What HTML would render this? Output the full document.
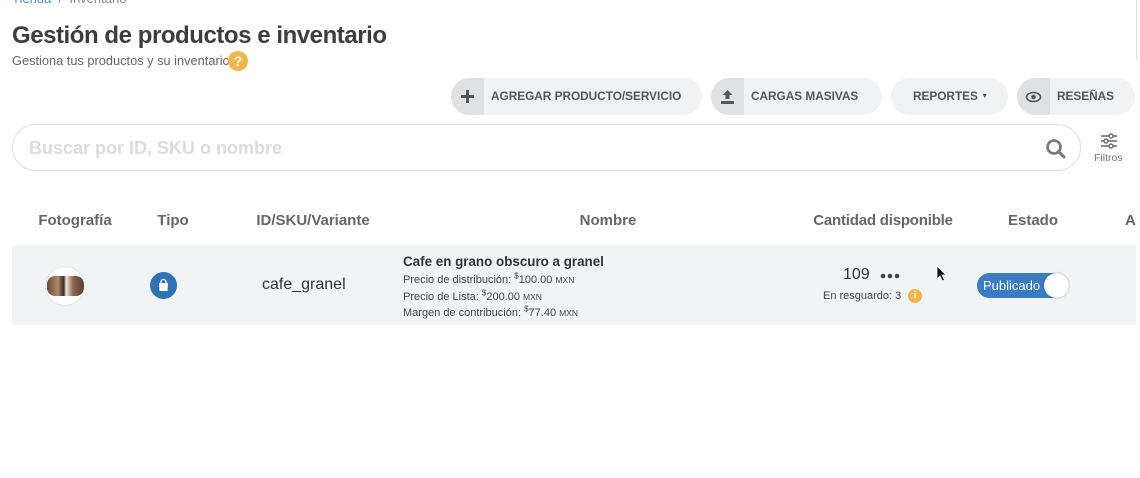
<!DOCTYPE html>
<html><head><meta charset="utf-8"><style>
body{margin:0;width:1140px;height:478px;overflow:hidden;background:#fff;font-family:"Liberation Sans",sans-serif;color:#444;position:relative}
.a{position:absolute;white-space:nowrap}
.btn{position:absolute;top:78px;height:37px;border-radius:19px;background:#f0f2f3;overflow:hidden;font-weight:bold;font-size:11.8px;color:#555;line-height:37px}
.ic{position:absolute;left:0;top:0;width:33px;height:37px;background:#dfe1e2}
.th{position:absolute;top:212px;font-weight:bold;font-size:15px;color:#666;transform:translateX(-50%)}
sup{line-height:0;font-size:8px}
</style></head><body>
<div class="a" style="left:12px;top:-9px;font-size:13px;color:#888"><span style="color:#4a90c8">Tienda</span> &nbsp;/&nbsp; Inventario</div>
<div class="a" style="left:12px;top:22px;font-size:24px;font-weight:bold;color:#3d3d3d;letter-spacing:-0.45px">Gestión de productos e inventario</div>
<div class="a" style="left:12px;top:53px;font-size:12.8px;color:#666">Gestiona tus productos y su inventario</div>
<div class="a" style="left:228px;top:51px;width:20px;height:20px;border-radius:50%;background:#f0b64a;color:#fff;font-weight:bold;font-size:14px;text-align:center;line-height:20px">?</div>
<div class="a" style="left:1136px;top:0;width:1px;height:60px;background:#ddd"></div>

<div class="btn" style="left:451px;width:251px"><div class="ic"><svg width="33" height="37"><path d="M16.5 12v13M10 18.5h13" stroke="#555" stroke-width="3"/></svg></div><span style="position:absolute;left:40px">AGREGAR PRODUCTO/SERVICIO</span></div>
<div class="btn" style="left:711px;width:171px"><div class="ic"><svg width="33" height="37"><path d="M16.5 12l-5 5h3v4h4v-4h3z M10 23h13v3H10z" fill="#555"/></svg></div><span style="position:absolute;left:40px">CARGAS MASIVAS</span></div>
<div class="btn" style="left:891px;width:117px"><span style="position:absolute;left:22px">REPORTES <span style="font-size:7px;vertical-align:2px">▼</span></span></div>
<div class="btn" style="left:1017px;width:118px"><div class="ic"><svg width="33" height="37"><ellipse cx="16.5" cy="19" rx="7" ry="4.5" fill="none" stroke="#555" stroke-width="1.6"/><circle cx="16.5" cy="19" r="2.3" fill="#555"/></svg></div><span style="position:absolute;left:40px">RESEÑAS</span></div>

<div class="a" style="left:12px;top:124px;width:1067px;height:45px;border:1px solid #ddd;border-radius:24px"></div>
<div class="a" style="left:29px;top:138px;font-size:18px;font-weight:bold;color:#dcdcdc">Buscar por ID, SKU o nombre</div>
<svg class="a" style="left:1045px;top:138px" width="22" height="22"><circle cx="9" cy="9" r="6.5" fill="none" stroke="#777" stroke-width="2.6"/><path d="M13.5 13.5l5.5 5.5" stroke="#777" stroke-width="3" stroke-linecap="round"/></svg>
<svg class="a" style="left:1099px;top:132px" width="20" height="18"><g stroke="#666" stroke-width="1.4" fill="#fff"><path d="M2 4h16M2 9h16M2 14h16"/><circle cx="12" cy="4" r="2"/><circle cx="7" cy="9" r="2"/><circle cx="12" cy="14" r="2"/></g></svg>
<div class="a" style="left:1094px;top:152px;font-size:10.5px;color:#777">Filtros</div>

<div class="th" style="left:75px">Fotografía</div>
<div class="th" style="left:173px">Tipo</div>
<div class="th" style="left:313px">ID/SKU/Variante</div>
<div class="th" style="left:608px">Nombre</div>
<div class="th" style="left:883px;letter-spacing:-0.2px">Cantidad disponible</div>
<div class="th" style="left:1033px">Estado</div>
<div class="a" style="left:1125px;top:212px;font-weight:bold;font-size:15px;color:#666">A</div>

<div class="a" style="left:12px;top:245px;width:1124px;height:80px;background:#f1f4f5"></div>
<div class="a" style="left:45px;top:266px;width:38px;height:38px;border-radius:50%;background:#fff;border:1px solid #e4e4e4;overflow:hidden"><div style="position:absolute;left:1px;top:9px;width:37px;height:20px;border-radius:8px;background:linear-gradient(90deg,#6b4a35,#b08a6a 30%,#3a2a20 45%,#efe7dc 52%,#8d6a50 70%,#5a3c2a)"></div></div>
<div class="a" style="left:150px;top:272px;width:27px;height:27px;border-radius:50%;background:#2f73b7"><svg width="27" height="27"><path d="M9 11h9l-0.5 8h-8z" fill="#fff"/><path d="M11 11.5v-1.5a2.5 2.5 0 0 1 5 0v1.5" fill="none" stroke="#fff" stroke-width="1.3"/></svg></div>
<div class="a" style="left:262px;top:276px;font-size:16px;color:#333">cafe_granel</div>
<div class="a" style="left:403px;top:254px;font-size:13.4px;font-weight:bold;color:#333">Cafe en grano obscuro a granel</div>
<div class="a" style="left:403px;top:272px;font-size:11px;color:#444;line-height:16.5px">Precio de distribución: <sup>$</sup>100.00 <span style="font-size:8.5px">MXN</span><br>Precio de Lista: <sup>$</sup>200.00 <span style="font-size:8.5px">MXN</span><br>Margen de contribución: <sup>$</sup>77.40 <span style="font-size:8.5px">MXN</span></div>
<div class="a" style="left:843px;top:266px;font-size:16px;color:#333">109</div>
<svg class="a" style="left:880px;top:272px" width="22" height="8"><circle cx="3" cy="4" r="2.3" fill="#444"/><circle cx="10" cy="4" r="2.3" fill="#444"/><circle cx="17" cy="4" r="2.3" fill="#444"/></svg>
<div class="a" style="left:823px;top:290px;font-size:11px;color:#444">En resguardo: 3</div>
<div class="a" style="left:908px;top:289px;width:14px;height:14px;border-radius:50%;background:#f0b64a;color:#fff;font-size:10px;font-weight:bold;text-align:center;line-height:14px;font-family:'Liberation Serif',serif">i</div>
<svg class="a" style="left:936px;top:265px" width="12" height="18"><path d="M1 1v13l3-3 2.5 5 2-1-2.5-5h4z" fill="#111" stroke="#fff" stroke-width="0.8"/></svg>
<div class="a" style="left:977px;top:273px;width:92px;height:25px;border-radius:13px;background:#3a7cc4"></div>
<div class="a" style="left:983px;top:278px;font-size:13px;color:#fff">Publicado</div>
<div class="a" style="left:1044px;top:273px;width:25px;height:25px;border-radius:50%;background:#fff;box-shadow:0 0 2px rgba(0,0,0,.3)"></div>
</body></html>
